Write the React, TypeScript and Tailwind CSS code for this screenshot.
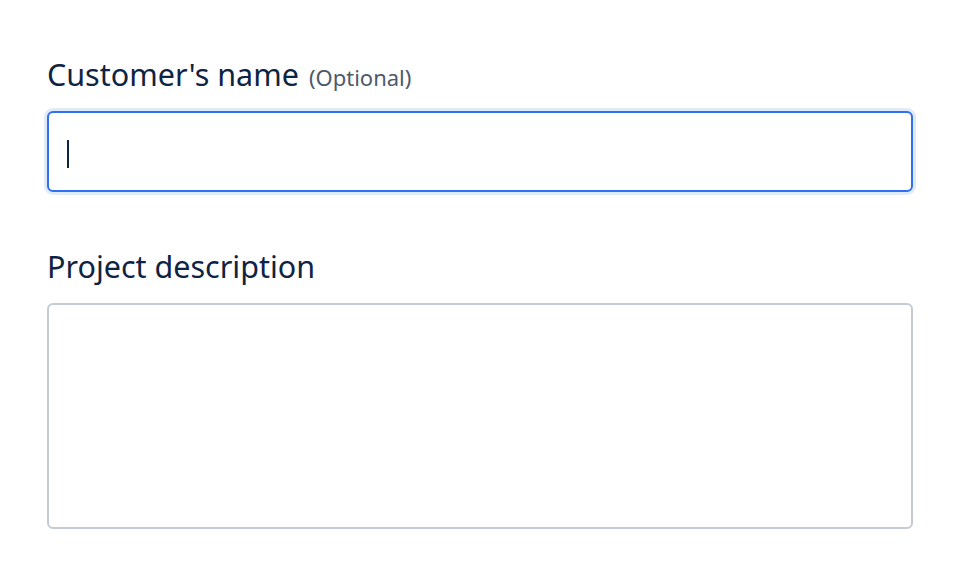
export default function App() {
  return (
    <div
      className="min-h-screen w-full bg-white px-[47px] pt-[52px]"
      style={{ fontFamily: '"Noto Sans", "Open Sans", sans-serif' }}
    >
      <div className="flex flex-col">
        <label className="mb-[12px] flex items-baseline gap-[10px] text-[30.5px] leading-[44px] text-[#0f2442]">
          <span>Customer's name</span>
          <span className="text-[22px] text-[#4d5a6b]">(Optional)</span>
        </label>
        <div className="relative">
          <input
            type="text"
            className="h-[81px] w-full rounded-[6px] border-2 border-[#2f6ff0] bg-white px-[20px] text-[28px] text-[#0f2442] caret-transparent shadow-[0_0_0_3px_rgba(47,111,240,0.15)] outline-none"
          />
          <span className="absolute left-[20px] top-[29px] h-[28px] w-[2px] bg-[#0f2442]" />
        </div>

        <label className="mb-[15px] mt-[52px] text-[30.5px] leading-[44px] text-[#0f2442]">
          Project description
        </label>
        <textarea className="h-[226px] w-full resize-none rounded-[6px] border-2 border-[#c3cbd6] bg-white outline-none" />
      </div>
    </div>
  );
}
